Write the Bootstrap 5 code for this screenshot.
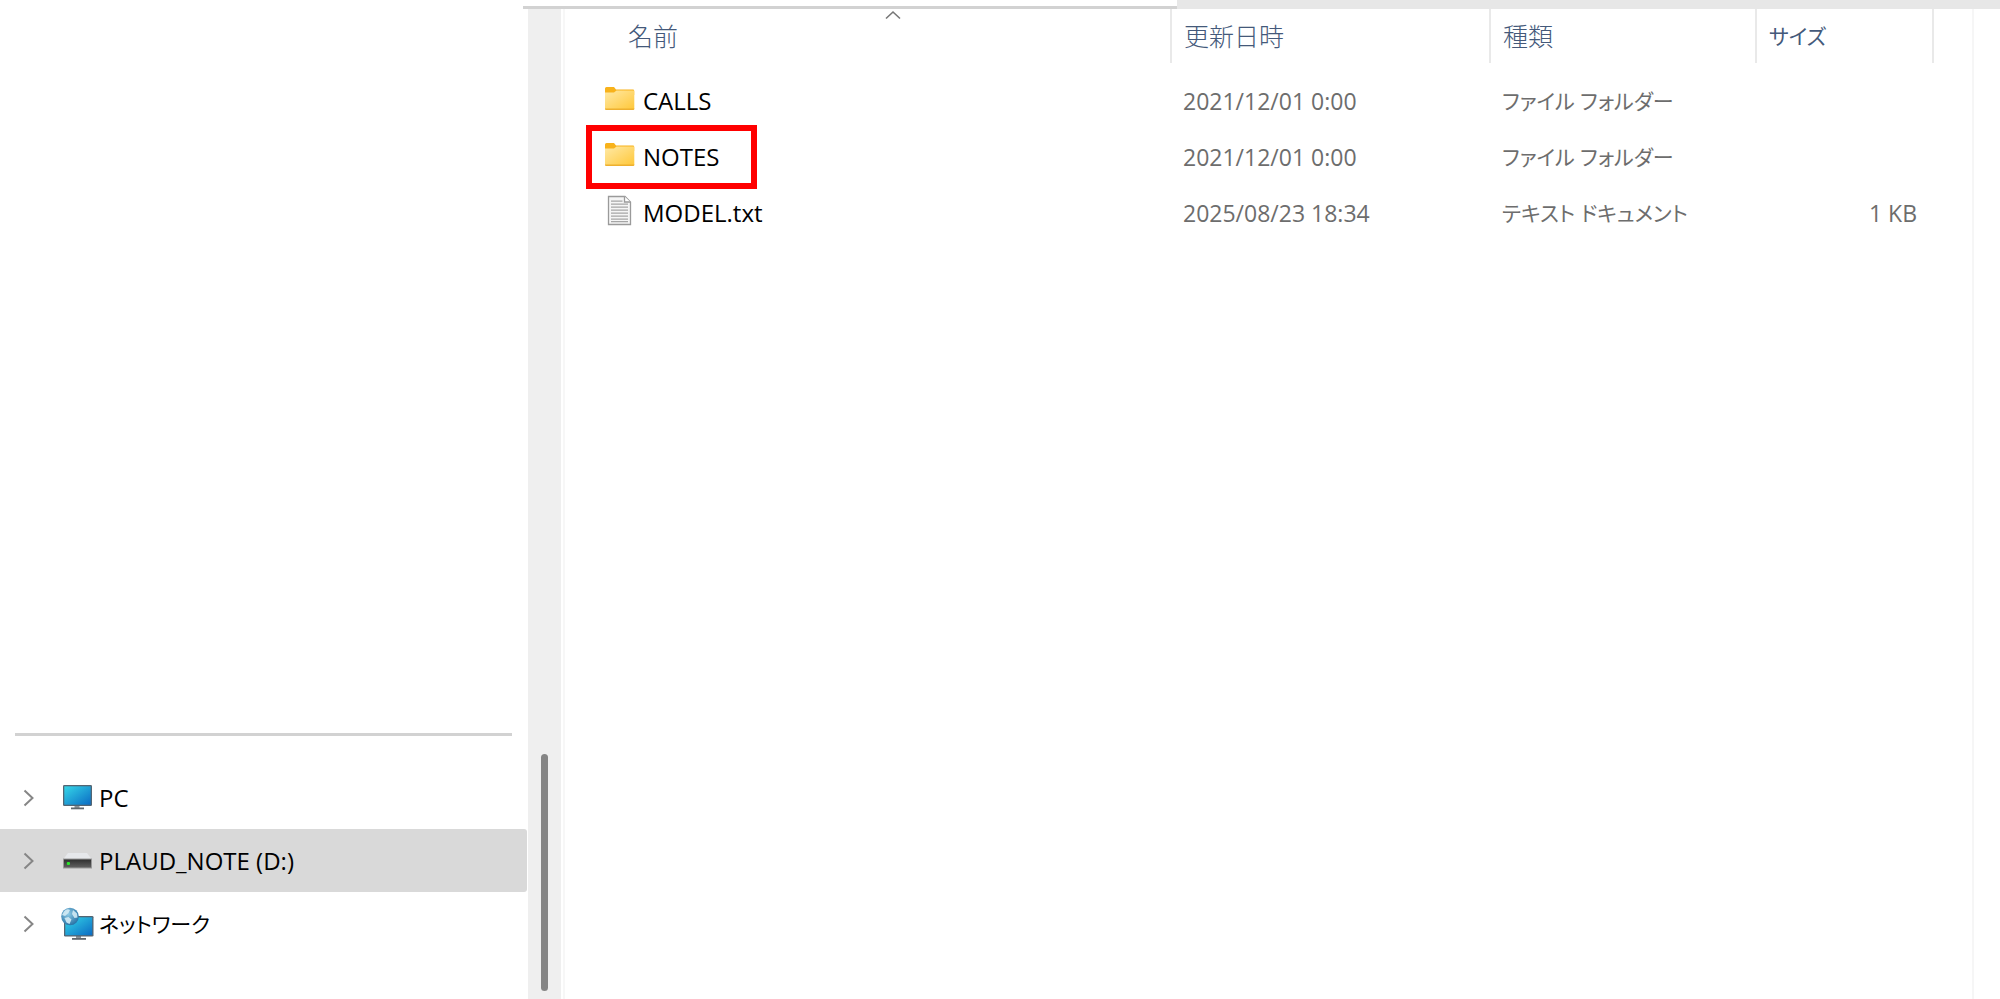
<!DOCTYPE html>
<html lang="ja">
<head>
<meta charset="utf-8">
<meta name="viewport" content="width=device-width, initial-scale=1">
<title>PLAUD_NOTE (D:)</title>
<link href="https://cdn.jsdelivr.net/npm/bootstrap@5.3.0/dist/css/bootstrap.min.css" rel="stylesheet">
<style>
body{font-family:"Open Sans","Noto Sans CJK JP",sans-serif;font-size:23px;line-height:32px;color:#000;background:#fff;font-feature-settings:"palt"}
a,button{color:inherit}
.tree-link,.entry{font-size:24px}
.kana,.files th.kana{font-size:21px}
.top-strip{height:9px}
.top-strip .rule{width:654px;margin-left:523px;height:3px;background:#d2d2d2}
.top-strip .band{background:#e7e7e7}
.side-pane{width:528px}
.side-pane hr{margin:0 16px 30px 15px;height:3px;background:#d2d2d2;border:0;opacity:1}
.tree{padding-bottom:44px}
.tree li{height:63px;padding-left:18px;margin-right:1px;border-radius:0 3px 3px 0}
.tree li.current{background:#d9d9d9}
.toggle{width:20px;height:32px}
.tree-link{margin-left:22px}
.tree-link svg{width:34px;height:34px;margin-right:5px}
.scroll-track{width:33px;background:#efefef;padding:0 13px 8px 13px}
.scroll-thumb{height:237px;border-radius:4px;background:#858585}
.file-pane{margin-left:2px;padding-right:38px;border-left:2px solid #f7f7f7}
.edge{width:28px;border-left:2px solid #f6f6f6}
.files{table-layout:fixed}
.files th{height:54px;padding:0 0 0 12px;border-right:2px solid #e9e9e9;color:#44597a;font-weight:300;font-size:25px;vertical-align:middle}
.files th.kana{font-weight:400}
.files th:first-child{padding-left:63px;border-right-color:#e9e9e9}
.files .sort{left:50px;right:0;top:1px}
.files .sort svg{display:block;margin:auto}
.files tbody::before{content:"";display:block;height:10px}
.files td{height:56px;padding:0 0 0 12px;color:#6d6d6d;vertical-align:middle}
.files td:first-child{padding-left:39px;color:#000}
.files td:last-child{padding-right:16px}
.c-date{width:319px}.c-type{width:266px}.c-size{width:177px}
.entry{width:max-content}
.entry svg{width:32px;height:32px;margin:-4px 7px 0 0}
.marked::after{content:"";position:absolute;left:-18px;top:-16px;width:171px;height:64px;border:6px solid #f00}
</style>
</head>
<body>
<svg width="0" height="0" class="position-absolute" aria-hidden="true">
<defs>
<linearGradient id="gf" x1="0" y1="0" x2="1" y2="1"><stop offset="0" stop-color="#ffe9a6"/><stop offset="1" stop-color="#ffc83a"/></linearGradient>
<linearGradient id="gs" x1="0" y1="0" x2="1" y2="1"><stop offset="0" stop-color="#35d6e8"/><stop offset="1" stop-color="#0b6cc4"/></linearGradient>
<linearGradient id="gd" x1="0" y1="0" x2="0" y2="1"><stop offset="0" stop-color="#2f2f2f"/><stop offset="1" stop-color="#606060"/></linearGradient>
<radialGradient id="gg" cx=".4" cy=".35" r=".7"><stop offset="0" stop-color="#8fcbe6"/><stop offset="1" stop-color="#246fa3"/></radialGradient>
<symbol id="folder" viewBox="0 0 32 32"><path d="M1 10V5.500a1.500 1.500 0 0 1 1.500-1.500H10l2 2.500H29a1.200 1.200 0 0 1 1.200 1.200V12H1z" fill="#f8b21b"/><path d="M1 9.500h9l2.500-2H29.500a.8.8 0 0 1 .8.800V26H1z" fill="url(#gf)"/><path d="M1 25.500h29.300v.5a1 1 0 0 1-1 1H2a1 1 0 0 1-1-1z" fill="#eeb02f"/></symbol>
<symbol id="text" viewBox="0 0 32 32"><path d="M4.500 1.500H21l5.500 5.500v22.500h-22z" fill="#f5f5f5" stroke="#9a9a9a" stroke-width="1.300"/><path d="M20.500 1.500V7H26.500" fill="#fff" stroke="#9a9a9a" stroke-width="1.300"/><path d="M7 6.500h11.500M7 9.500h17M7 12.500h17M7 15.500h17M7 18.500h17M7 21.500h17M7 24.500h17M7 27h17" transform="translate(0 -.4)" stroke="#a5a5a5" stroke-width="1.300"/></symbol>
<symbol id="pc" viewBox="0 0 34 34"><path d="M14.500 24h5v3h-5z" fill="#8b9399"/><path d="M11 26.500h13v1.800H11z" fill="#60676e"/><rect x="3" y="4" width="29" height="21" rx="1.300" fill="#536573"/><rect x="4.300" y="5.300" width="26.400" height="18.400" fill="url(#gs)"/></symbol>
<symbol id="drive" viewBox="0 0 34 34"><path d="M8 9h19l4.500 6H3.500z" fill="#e6e8eb"/><rect x="3" y="14.500" width="29" height="10" fill="#999"/><rect x="4" y="15.500" width="27" height="8" fill="url(#gd)"/><rect x="6.800" y="18" width="3.200" height="3" rx="1" fill="#2be52b"/></symbol>
<symbol id="net" viewBox="0 0 34 34"><path d="M16 29h5v3h-5z" fill="#8b9399"/><path d="M12 31h14v1.800H12z" fill="#60676e"/><rect x="4" y="9" width="29.500" height="20.500" rx="1.300" fill="#536573"/><rect x="5.300" y="10.300" width="26.900" height="17.900" fill="url(#gs)"/><circle cx="10" cy="9.500" r="8.800" fill="url(#gg)"/><path d="M4 4.500Q7 1 10 3L8.500 6 5 9 2 8zM4.500 11l4-1 3 2.500-2 4.500-3-1.500zM13 3l4 3.500.5 4-3 .5-2.500-4z" fill="#d9eff7" opacity=".85"/></symbol>
<symbol id="chev" viewBox="0 0 20 32"><path d="M6.500 8.500l8 7.500-8 7.500" fill="none" stroke="#868686" stroke-width="2"/></symbol>
</defs>
</svg>
<div class="d-flex flex-column min-vh-100">
  <div class="top-strip d-flex align-items-end">
    <div class="rule flex-shrink-0 mb-0"></div>
    <div class="band flex-grow-1 align-self-stretch"></div>
  </div>
  <div class="d-flex flex-grow-1">
    <nav class="side-pane flex-shrink-0 d-flex flex-column justify-content-end" aria-label="ナビゲーション">
      <hr>
      <ul class="tree list-unstyled mb-0">
        <li class="d-flex align-items-center">
          <button class="toggle btn p-0 border-0 d-flex" aria-label="展開"><svg width="20" height="32"><use href="#chev"/></svg></button>
          <a class="tree-link d-flex align-items-center text-decoration-none" href="#"><svg><use href="#pc"/></svg><span>PC</span></a>
        </li>
        <li class="current d-flex align-items-center">
          <button class="toggle btn p-0 border-0 d-flex" aria-label="展開"><svg width="20" height="32"><use href="#chev"/></svg></button>
          <a class="tree-link d-flex align-items-center text-decoration-none" href="#" aria-current="page"><svg><use href="#drive"/></svg><span>PLAUD_NOTE (D:)</span></a>
        </li>
        <li class="d-flex align-items-center">
          <button class="toggle btn p-0 border-0 d-flex" aria-label="展開"><svg width="20" height="32"><use href="#chev"/></svg></button>
          <a class="tree-link d-flex align-items-center text-decoration-none" href="#"><svg><use href="#net"/></svg><span class="kana">ネットワーク</span></a>
        </li>
      </ul>
    </nav>
    <div class="scroll-track flex-shrink-0 d-flex flex-column justify-content-end"><div class="scroll-thumb"></div></div>
    <main class="file-pane flex-grow-1">
      <table class="files w-100">
        <colgroup><col><col class="c-date"><col class="c-type"><col class="c-size"></colgroup>
        <thead>
          <tr>
            <th class="position-relative" scope="col" aria-sort="ascending">名前<span class="sort position-absolute"><svg width="16" height="10"><path d="M1 8.500l7-6.500 7 6.500" fill="none" stroke="#777" stroke-width="1.600"/></svg></span></th>
            <th scope="col">更新日時</th>
            <th scope="col">種類</th>
            <th class="kana" scope="col">サイズ</th>
          </tr>
        </thead>
        <tbody>
          <tr>
            <td><a class="entry d-flex align-items-center text-decoration-none" href="#"><svg><use href="#folder"/></svg><span>CALLS</span></a></td>
            <td>2021/12/01 0:00</td><td class="kana">ファイル フォルダー</td><td></td>
          </tr>
          <tr>
            <td><a class="entry marked position-relative d-flex align-items-center text-decoration-none" href="#"><svg><use href="#folder"/></svg><span>NOTES</span></a></td>
            <td>2021/12/01 0:00</td><td class="kana">ファイル フォルダー</td><td></td>
          </tr>
          <tr>
            <td><a class="entry d-flex align-items-center text-decoration-none" href="#"><svg><use href="#text"/></svg><span>MODEL.txt</span></a></td>
            <td>2025/08/23 18:34</td><td class="kana">テキスト ドキュメント</td><td class="text-end">1 KB</td>
          </tr>
        </tbody>
      </table>
    </main>
    <div class="edge flex-shrink-0"></div>
  </div>
</div>
<script src="https://cdn.jsdelivr.net/npm/bootstrap@5.3.0/dist/js/bootstrap.bundle.min.js"></script>
</body>
</html>
